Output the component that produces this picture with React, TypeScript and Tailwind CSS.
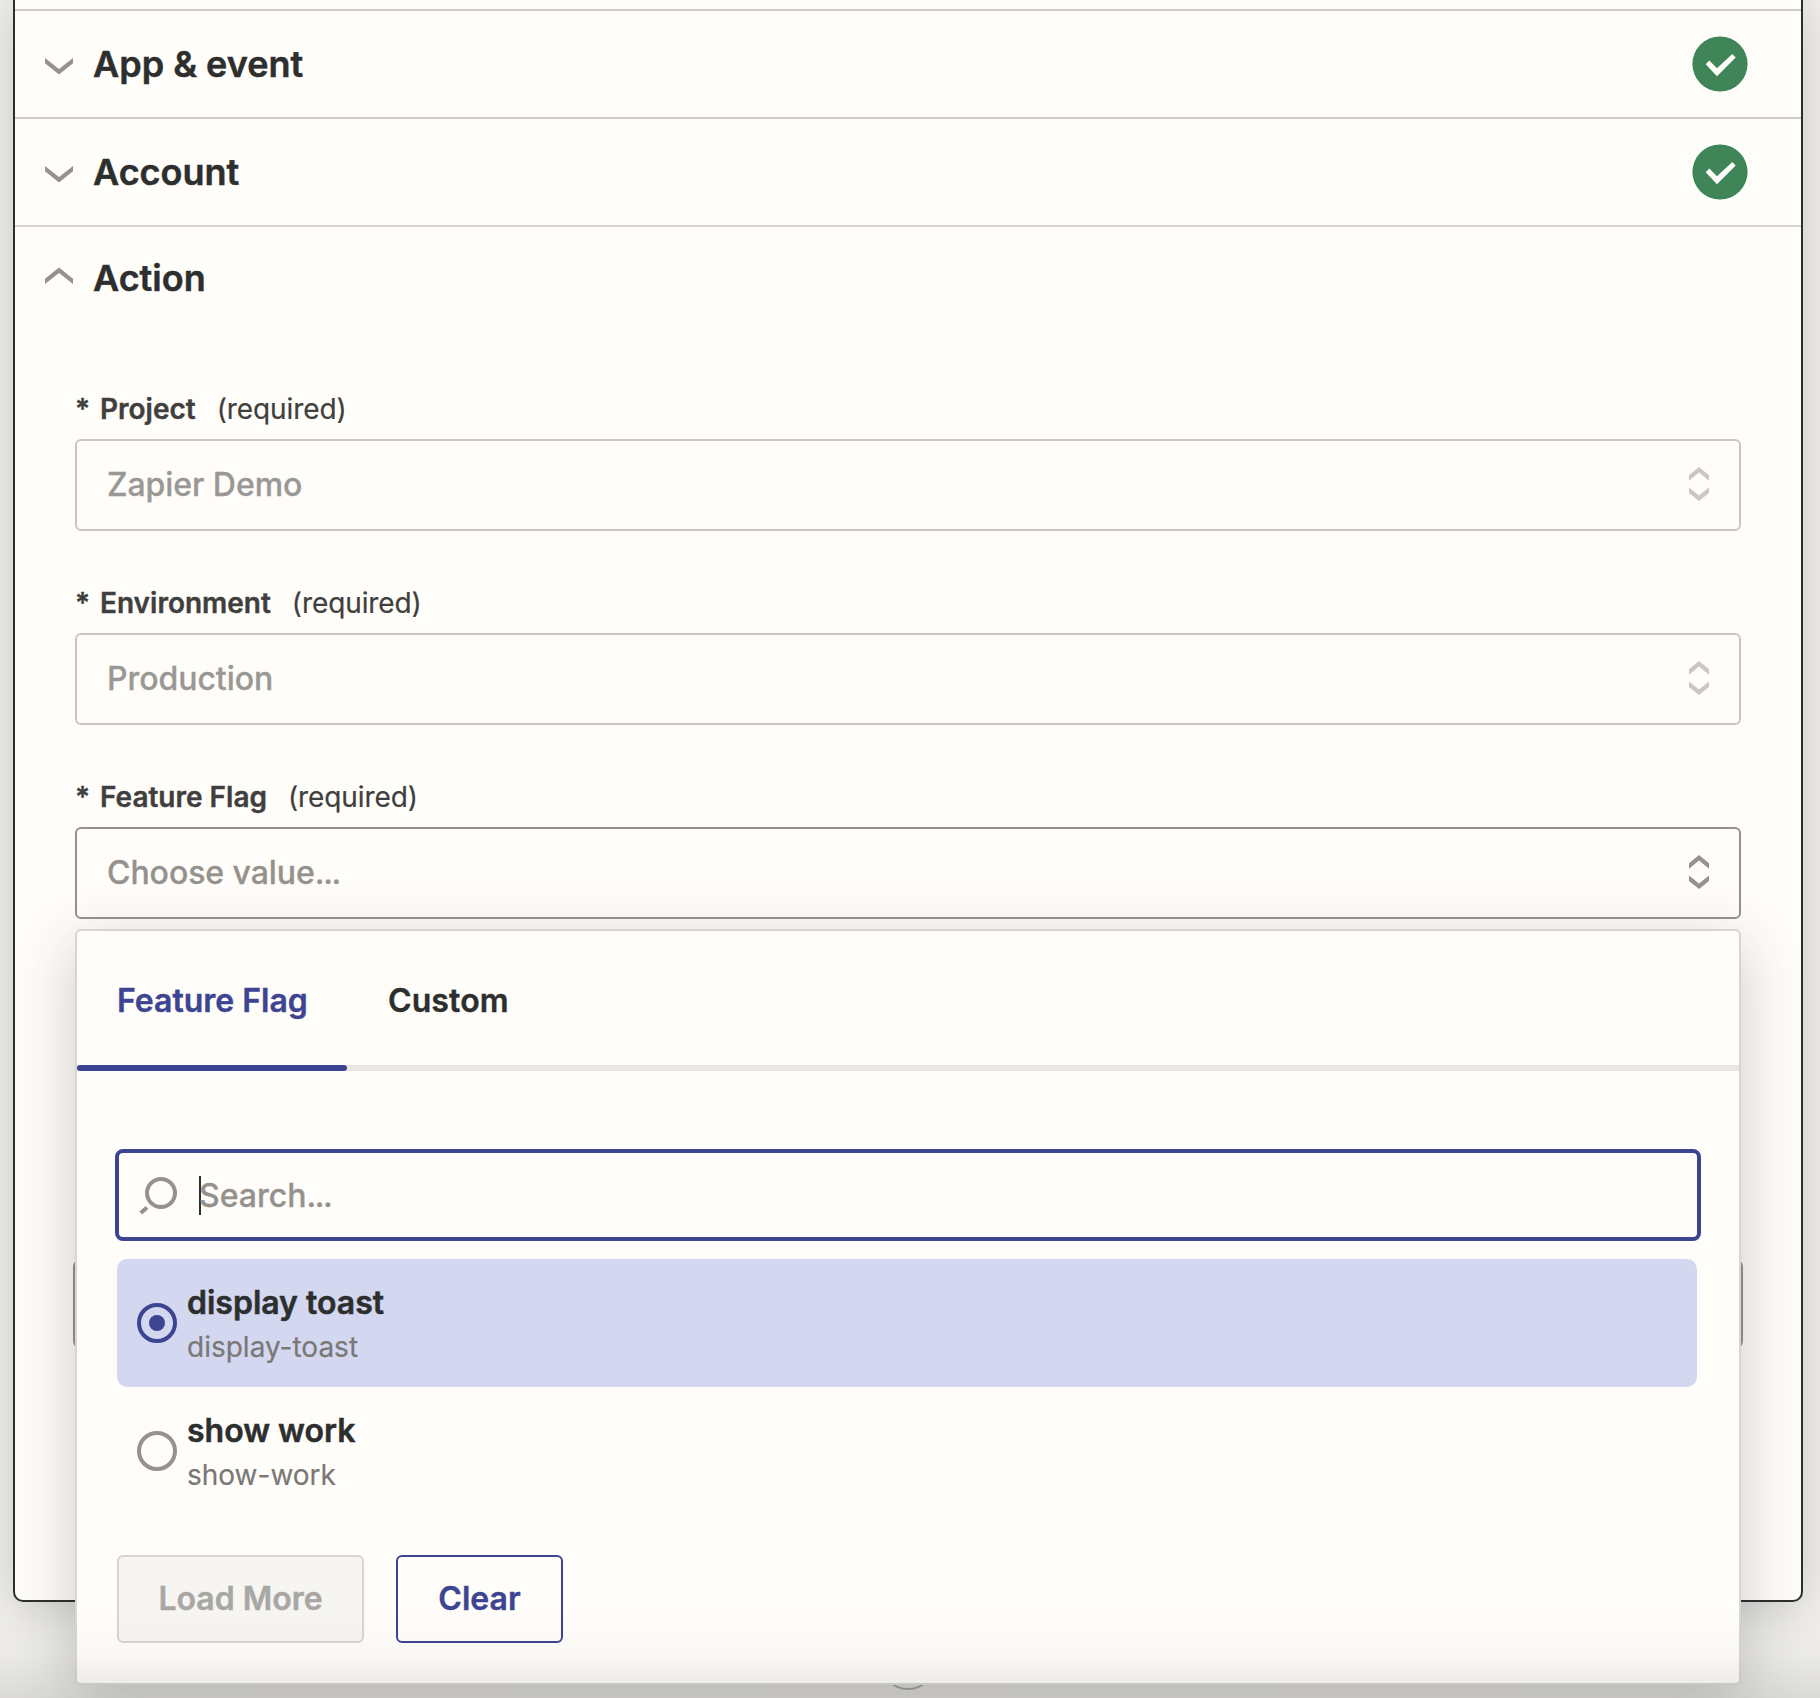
import React from "react";

function Chevron({ up = false }: { up?: boolean }) {
  return (
    <svg width="28" height="17" viewBox="0 0 28 17" className={up ? "rotate-180" : ""}>
      <path d="M0 0 14 11 28 0v5.3L14 16.5 0 5.3Z" fill="#95928e" />
    </svg>
  );
}

function Done() {
  return (
    <svg width="56" height="56" viewBox="0 0 56 56">
      <circle cx="28" cy="28" r="27.6" fill="#408557" />
      <path d="M13.7 28.3 17.3 24.4 25 32.3 40.3 18 43.7 21.4 25 40.3Z" fill="#fffdf9" />
    </svg>
  );
}

function SectionRow({ title, line }: { title: string; line: string }) {
  return (
    <div className={`flex h-[108px] items-center border-b-2 pl-[30px] pr-[53px] ${line}`}>
      <div className="mt-1">
        <Chevron />
      </div>
      <h2 className="ml-5 flex-1 text-4xl font-semibold leading-[44px] [-webkit-text-stroke:0.5px]">{title}</h2>
      <Done />
    </div>
  );
}

function Field({ label, value, disabled = false }: { label: string; value: string; disabled?: boolean }) {
  const dots = value.endsWith("...");
  return (
    <div className="mb-[46px]">
      <div className="flex h-[56px] items-start pt-[9px] text-[28px] leading-[34px] text-[#403f3e]">
        <span className="w-[25px] font-semibold [-webkit-text-stroke:0.4px]">*</span>
        <span className="font-semibold [-webkit-text-stroke:0.4px]">{label}</span>
        <span className="ml-[21px] tracking-[-0.1px] [-webkit-text-stroke:0.2px]">(required)</span>
      </div>
      <div
        className={`flex h-[92px] items-center justify-between rounded-md border-2 pl-[30px] pr-[30px] text-[32px] font-medium leading-10 ${
          disabled ? "border-[#c9c7c3] text-[#9a9895]" : "border-[#95928e] text-[#95928e]"
        }`}
      >
        <span className="tracking-[-0.05px] [-webkit-text-stroke:0.3px]">
          {dots ? value.slice(0, -3) : value}
          {dots && <span className="tracking-[-1.3px]">...</span>}
        </span>
        <svg
          width="20"
          height="34"
          viewBox="0 0 20 34"
          className={disabled ? "mb-[2px] fill-[#c9c7c3]" : "mb-[2px] fill-[#95928e]"}
        >
          <path d="M10 0 20 8.2V13.8L10 5.6 0 13.8V8.2Z" />
          <path d="M0 20.4 10 28.4 20 20.4V26L10 34 0 26Z" />
        </svg>
      </div>
    </div>
  );
}

function Option({ title, slug, selected = false }: { title: string; slug: string; selected?: boolean }) {
  return (
    <div className={`flex h-[128px] items-center rounded-[10px] pl-5 ${selected ? "bg-[#d3d7f0]" : ""}`}>
      <span
        className={`flex size-10 items-center justify-center rounded-full border-4 ${
          selected ? "border-[#3d4592]" : "border-[#95928e]"
        }`}
      >
        {selected && <span className="size-4 rounded-full bg-[#3d4592]" />}
      </span>
      <div className="ml-[10px] pt-1">
        <div className="text-[32px] font-semibold leading-[44px] [-webkit-text-stroke:0.5px]">{title}</div>
        <div className="text-[28px] leading-[44px] text-[#7a7876] [-webkit-text-stroke:0.2px]">{slug}</div>
      </div>
    </div>
  );
}

function FlagMenu() {
  return (
    <div className="absolute left-[75px] top-[929px] h-[756px] w-[1666px] rounded-md border-2 border-[#d7d5d2] bg-[#fffdf9] shadow-[0_16px_60px_0_rgba(45,46,46,0.24)]">
      <div className="flex h-[140px] border-b-[6px] border-[#e8e7e4] text-[32px] font-semibold leading-10 [-webkit-text-stroke:0.4px]">
        <div className="flex h-[140px] w-[270px] flex-col">
          <span className="flex flex-1 items-center pl-10 pt-[6px] text-[#3d4592]">Feature Flag</span>
          <span className="h-[6px] rounded-[3px] bg-[#3d4592]" />
        </div>
        <span className="pl-[41px] pt-[50px] tracking-[0.1px]">Custom</span>
      </div>
      <div className="px-[38px] pt-[78px]">
        <div className="flex h-[92px] items-center rounded-lg border-4 border-[#3d4592] pl-5">
          <svg width="40" height="40" viewBox="0 0 40 40" fill="none" stroke="#95928e" strokeWidth="4">
            <circle cx="22" cy="18" r="14" />
            <path d="M1.8 38 8 32.4" />
          </svg>
          <span className="ml-5 h-[39px] w-[2px] bg-[#2d2e2e]" />
          <span className="-ml-[2px] pt-[2px] text-[32px] font-medium leading-10 text-[#95928e] [-webkit-text-stroke:0.3px]">
            Search<span className="tracking-[-1.4px]">...</span>
          </span>
        </div>
      </div>
      <div className="px-10 pt-[18px]">
        <div className="w-[1580px]">
          <Option title="display toast" slug="display-toast" selected />
          <Option title="show work" slug="show-work" />
        </div>
        <div className="mt-10 flex gap-8 text-[32px] font-semibold [-webkit-text-stroke:0.4px]">
          <button className="h-[88px] w-[247px] rounded-md border-2 border-[#d7d5d2] bg-[#f6f5f2] text-[#a8a7a4]">
            Load More
          </button>
          <button className="h-[88px] w-[167px] rounded-md border-2 border-[#3d4592] text-[#3d4592]">Clear</button>
        </div>
      </div>
    </div>
  );
}

export default function App() {
  return (
    <div className="relative h-[1698px] w-[1820px] overflow-hidden bg-[#f0efec] font-[Inter,sans-serif] text-[#2d2e2e]">
      <div className="ml-[13px] h-[1602px] w-[1790px] rounded-b-[10px] border-2 border-t-0 border-[#2d2e2e] bg-[#fffdf9] shadow-[0_4px_44px_0_rgba(45,46,46,0.2)]">
        <div className="h-[11px] border-b-2 border-[#cfcccc]" />
        <SectionRow title="App & event" line="border-[#cfcccc]" />
        <SectionRow title="Account" line="border-[#d7d5d2]" />
        <div className="flex h-[156px] items-start pl-[30px] pt-[29px]">
          <div className="mt-[11px]">
            <Chevron up />
          </div>
          <h2 className="ml-5 text-4xl font-semibold leading-[44px] [-webkit-text-stroke:0.5px]">Action</h2>
        </div>
        <div className="w-[1726px] pl-[60px]">
          <Field label="Project" value="Zapier Demo" disabled />
          <Field label="Environment" value="Production" disabled />
          <Field label="Feature Flag" value="Choose value..." />
        </div>
      </div>
      <div className="absolute left-[73px] top-[1259px] h-[90px] w-[1670px] rounded-lg border-2 border-[#95928e]" />
      <div className="absolute left-[880px] top-[1634px] size-14 rounded-full border-2 border-[#b0aeab] bg-[#f0efec]" />
      <FlagMenu />
      <div className="pointer-events-none absolute inset-x-0 bottom-0 h-[90px] bg-linear-to-b from-transparent via-black/[0.02] to-black/[0.09]" />
    </div>
  );
}
